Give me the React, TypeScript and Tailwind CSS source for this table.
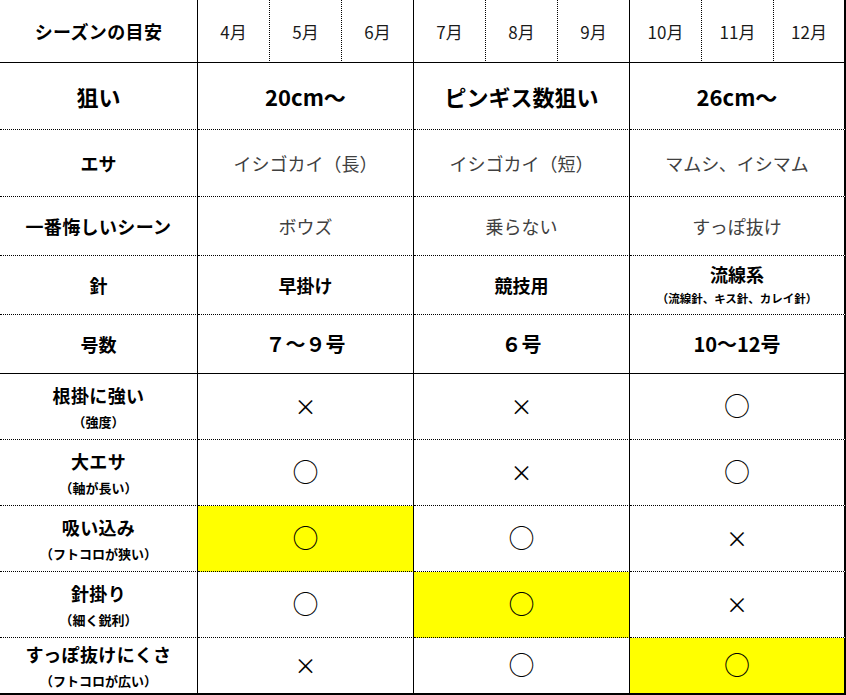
import React from 'react';

type Mark = '○' | '×';

interface MarkRow {
  label: string;
  sub: string;
  marks: Mark[];
  hi: number; // index of yellow group, -1 for none
}

const months = ['4月', '5月', '6月', '7月', '8月', '9月', '10月', '11月', '12月'];

const markRows: MarkRow[] = [
  { label: '根掛に強い', sub: '（強度）', marks: ['×', '×', '○'], hi: -1 },
  { label: '大エサ', sub: '（軸が長い）', marks: ['○', '×', '○'], hi: -1 },
  { label: '吸い込み', sub: '（フトコロが狭い）', marks: ['○', '○', '×'], hi: 0 },
  { label: '針掛り', sub: '（細く鋭利）', marks: ['○', '○', '×'], hi: 1 },
  { label: 'すっぽ抜けにくさ', sub: '（フトコロが広い）', marks: ['×', '○', '○'], hi: 2 },
];

// right border per group: last group gets the thick table edge
const groupEdge = ['border-r', 'border-r', 'border-r-2'];
const dotB = 'border-b [border-bottom-style:dotted]';

function Cell({
  className = '',
  children,
}: {
  className?: string;
  children?: React.ReactNode;
}) {
  return (
    <div className={`flex flex-col items-center justify-center border-black ${className}`}>
      {children}
    </div>
  );
}

function MarkGlyph({ mark }: { mark: Mark }) {
  if (mark === '○') {
    return <span className="text-[26px] leading-none text-black -mt-[4px]">○</span>;
  }
  return <span className="text-[22px] leading-none text-black -mt-[3px]">×</span>;
}

export default function App() {
  return (
    <div className="w-[846px] h-[695px] bg-white font-['Noto_Sans_CJK_JP','Noto_Sans',sans-serif] overflow-hidden">
      <div className="grid grid-cols-[198px_repeat(9,72px)] grid-rows-[63px_67px_67px_59px_59px_59px_66px_66px_66px_66px_57px]">
        {/* header */}
        <Cell className="border-r border-b">
          <span className="text-[18px] font-bold leading-none tracking-[0.02em]">シーズンの目安</span>
        </Cell>
        {months.map((m, i) => (
          <Cell
            key={m}
            className={`border-b ${
              i === 8 ? 'border-r-2' : i % 3 === 2 ? 'border-r' : 'border-r [border-right-style:dotted]'
            }`}
          >
            <span className="text-[17px] leading-none text-[#1a1a1a]">{m}</span>
          </Cell>
        ))}

        {/* 狙い */}
        <Cell className={`border-r ${dotB}`}>
          <span className="text-[22px] font-bold leading-none">狙い</span>
        </Cell>
        {['20cm～', 'ピンギス数狙い', '26cm～'].map((v, g) => (
          <Cell key={v} className={`col-span-3 ${groupEdge[g]} ${dotB}`}>
            <span className="text-[22px] font-bold leading-none">{v}</span>
          </Cell>
        ))}

        {/* エサ */}
        <Cell className={`border-r ${dotB}`}>
          <span className="text-[18px] font-bold leading-none">エサ</span>
        </Cell>
        {['イシゴカイ（長）', 'イシゴカイ（短）', 'マムシ、イシマム'].map((v, g) => (
          <Cell key={v} className={`col-span-3 ${groupEdge[g]} ${dotB}`}>
            <span className="text-[18px] leading-none text-[#404040]">{v}</span>
          </Cell>
        ))}

        {/* 一番悔しいシーン */}
        <Cell className={`border-r ${dotB}`}>
          <span className="text-[18px] font-bold leading-none tracking-[0.02em]">一番悔しいシーン</span>
        </Cell>
        {['ボウズ', '乗らない', 'すっぽ抜け'].map((v, g) => (
          <Cell key={v} className={`col-span-3 ${groupEdge[g]} ${dotB}`}>
            <span className="text-[18px] leading-none text-[#404040]">{v}</span>
          </Cell>
        ))}

        {/* 針 */}
        <Cell className={`border-r ${dotB}`}>
          <span className="text-[18px] font-bold leading-none">針</span>
        </Cell>
        <Cell className={`col-span-3 ${groupEdge[0]} ${dotB}`}>
          <span className="text-[18px] font-bold leading-none">早掛け</span>
        </Cell>
        <Cell className={`col-span-3 ${groupEdge[1]} ${dotB}`}>
          <span className="text-[18px] font-bold leading-none">競技用</span>
        </Cell>
        <Cell className={`col-span-3 ${groupEdge[2]} ${dotB}`}>
          <span className="text-[18px] font-bold leading-none">流線系</span>
          <span className="text-[11.5px] font-bold leading-none mt-[10px]">（流線針、キス針、カレイ針）</span>
        </Cell>

        {/* 号数 */}
        <Cell className="border-r border-b">
          <span className="text-[18px] font-bold leading-none">号数</span>
        </Cell>
        {['７～９号', '６号', '10～12号'].map((v, g) => (
          <Cell key={v} className={`col-span-3 border-b ${groupEdge[g]}`}>
            <span className="text-[20px] font-bold leading-none">{v}</span>
          </Cell>
        ))}

        {/* marks */}
        {markRows.map((r, ri) => {
          const last = ri === markRows.length - 1;
          const bottom = last ? 'border-b-2' : dotB;
          return (
            <React.Fragment key={r.label}>
              <Cell className={`border-r ${bottom}`}>
                <span className="text-[18px] font-bold leading-none tracking-[0.02em]">{r.label}</span>
                <span className="text-[13px] font-bold leading-none mt-[11px]">{r.sub}</span>
              </Cell>
              {r.marks.map((m, g) => (
                <Cell
                  key={g}
                  className={`col-span-3 ${groupEdge[g]} ${bottom} ${r.hi === g ? 'bg-[#ffff00]' : ''}`}
                >
                  <MarkGlyph mark={m} />
                </Cell>
              ))}
            </React.Fragment>
          );
        })}
      </div>
    </div>
  );
}
